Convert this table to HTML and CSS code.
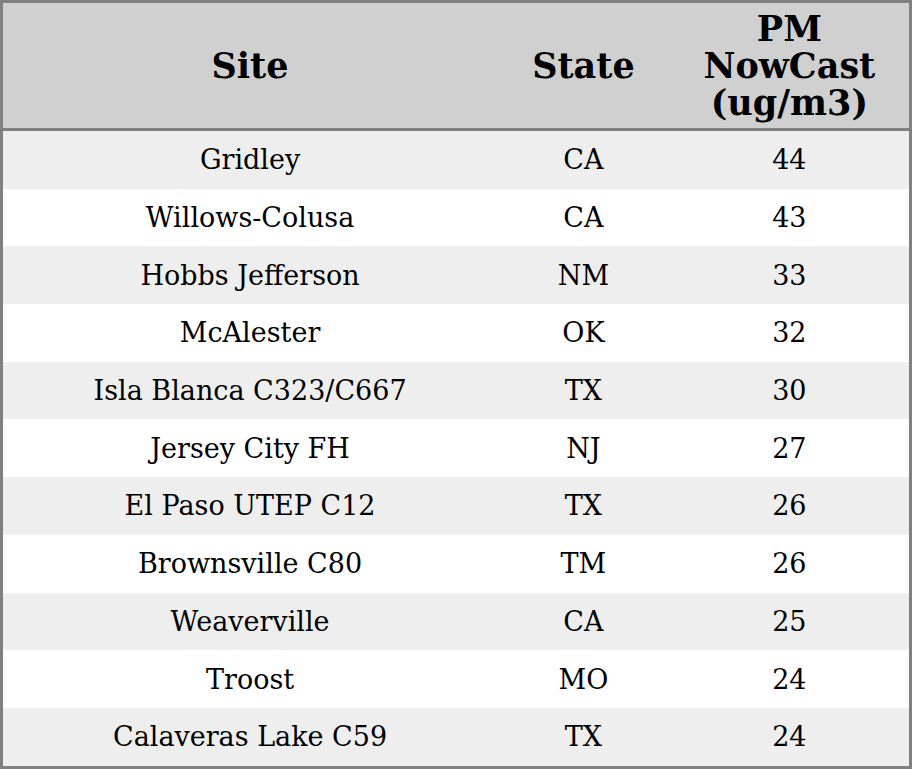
FILE: index.html
```html
<!DOCTYPE html>
<html>
<head>
<meta charset="utf-8">
<link rel="stylesheet" href="styles.css">
</head>
<body>
<table class="aq-table">
  <colgroup>
    <col class="col-site">
    <col class="col-state">
    <col class="col-pm">
  </colgroup>
  <thead>
    <tr class="head-row">
      <th>Site</th>
      <th>State</th>
      <th>PM<br>NowCast<br>(ug/m3)</th>
    </tr>
  </thead>
  <tbody>
    <tr><td>Gridley</td><td>CA</td><td>44</td></tr>
    <tr><td>Willows-Colusa</td><td>CA</td><td>43</td></tr>
    <tr><td>Hobbs Jefferson</td><td>NM</td><td>33</td></tr>
    <tr><td>McAlester</td><td>OK</td><td>32</td></tr>
    <tr><td>Isla Blanca C323/C667</td><td>TX</td><td>30</td></tr>
    <tr><td>Jersey City FH</td><td>NJ</td><td>27</td></tr>
    <tr><td>El Paso UTEP C12</td><td>TX</td><td>26</td></tr>
    <tr><td>Brownsville C80</td><td>TM</td><td>26</td></tr>
    <tr><td>Weaverville</td><td>CA</td><td>25</td></tr>
    <tr><td>Troost</td><td>MO</td><td>24</td></tr>
    <tr><td>Calaveras Lake C59</td><td>TX</td><td>24</td></tr>
  </tbody>
</table>
</body>
</html>
```
FILE: styles.css
```css
html, body {
  margin: 0;
  padding: 0;
  background: #ffffff;
}
.aq-table {
  width: 912px;
  border-collapse: collapse;
  table-layout: fixed;
  border: 3px solid #808080;
  font-family: "DejaVu Serif", serif;
  color: #000;
}
.col-site { width: 494px; }
.col-state { width: 172px; }
.col-pm { width: 240px; }
.head-row {
  background: #d0d0d0;
}
.head-row th {
  height: 128px;
  box-sizing: border-box;
  font-size: 35px;
  font-weight: bold;
  line-height: 37px;
  text-align: center;
  vertical-align: middle;
  padding: 0;
  border-bottom: 3px solid #808080;
}
tbody tr:nth-child(odd) {
  background: #eeeeee;
}
tbody td {
  height: 57.7px;
  font-size: 27px;
  text-align: center;
  vertical-align: middle;
  padding: 0;
}
```
